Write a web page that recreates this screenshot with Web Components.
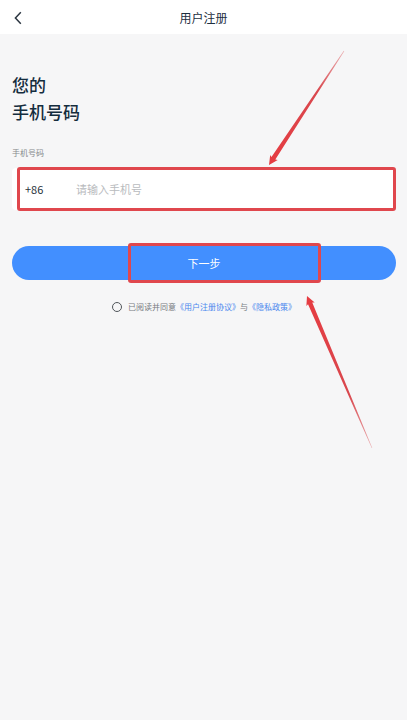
<!DOCTYPE html>
<html lang="zh-CN">
<head>
<meta charset="utf-8">
<meta name="viewport" content="width=device-width, initial-scale=1">
<title>用户注册</title>
<style>
  body {
    margin: 0;
    min-height: 100vh;
    background: #f6f6f7;
    color: #1d2f3f;
    font-family: "Noto Sans CJK SC", "Noto Sans", sans-serif;
  }
</style>
</head>
<body>
<register-page>
  <nav-bar>用户注册</nav-bar>
  <page-heading>您的<br>手机号码</page-heading>
  <phone-field label="手机号码" code="+86" placeholder="请输入手机号"></phone-field>
  <submit-button>下一步</submit-button>
  <consent-row></consent-row>
</register-page>

<script>
// Small helper: attach an open shadow root with the given markup
const shadow = (el, html) => {
  el.attachShadow({ mode: 'open' }).innerHTML = html;
};

class RegisterPage extends HTMLElement {
  connectedCallback() {
    shadow(this, `
      <style>
        :host {
          display: flex;
          flex-direction: column;
        }
        ::slotted(:not(nav-bar)) {
          margin-left: 12px;
          margin-right: 11px;
        }
      </style>
      <slot></slot>
    `);
  }
}

class NavBar extends HTMLElement {
  connectedCallback() {
    shadow(this, `
      <style>
        :host {
          display: grid;
          grid-template-columns: 36px 1fr 36px;
          align-items: center;
          height: 34px;
          padding-top: 2px;
          box-sizing: border-box;
          background: #fff;
        }
        button {
          display: flex;
          justify-content: center;
          border: 0;
          padding: 0;
          background: none;
          color: #2b3540;
        }
        h1 {
          margin: 0;
          font-size: 12px;
          line-height: 16px;
          font-weight: 400;
          text-align: center;
        }
      </style>
      <button type="button" aria-label="返回">
        <svg width="8" height="14" viewBox="0 0 8 14" fill="none" stroke="currentColor" stroke-width="1.5">
          <path d="M6.8 1.2 1.4 7l5.4 5.8"/>
        </svg>
      </button>
      <h1><slot></slot></h1>
    `);
  }
}

class PageHeading extends HTMLElement {
  connectedCallback() {
    shadow(this, `
      <style>
        :host { display: block; margin-top: 37px; }
        h2 {
          margin: 0;
          font-size: 17px;
          line-height: 27px;
          font-weight: 500;
          color: #142c3d;
        }
      </style>
      <h2><slot></slot></h2>
    `);
  }
}

class PhoneField extends HTMLElement {
  connectedCallback() {
    shadow(this, `
      <style>
        :host { display: block; margin-top: 22px; }
        label {
          display: block;
          font-size: 8px;
          line-height: 12px;
          color: #85888b;
        }
        .box {
          position: relative;
          display: flex;
          align-items: center;
          height: 42px;
          margin-top: 9px;
          padding-left: 13px;
          border-radius: 4px;
          background: #fff;
          font-size: 11px;
        }
        .code { width: 51px; color: #28323b; }
        input {
          flex: 1;
          min-width: 0;
          border: 0;
          padding: 0;
          outline: 0;
          background: none;
          font: inherit;
          color: #28323b;
        }
        input::placeholder { color: #b9bbbe; }
        mark-frame { inset: -1px 0 -1px 5px; }
        mark-arrow { right: 52px; bottom: 45px; }
      </style>
      <label for="phone">${this.getAttribute('label')}</label>
      <div class="box">
        <span class="code">${this.getAttribute('code')}</span>
        <input id="phone" type="tel" placeholder="${this.getAttribute('placeholder')}">
        <mark-frame></mark-frame>
        <mark-arrow width="75" height="114" tail="75,0" tip="0,114"></mark-arrow>
      </div>
    `);
  }
}

class SubmitButton extends HTMLElement {
  connectedCallback() {
    shadow(this, `
      <style>
        :host { display: block; position: relative; margin-top: 36px; }
        button {
          display: block;
          width: 100%;
          height: 34px;
          border: 0;
          border-radius: 17px;
          background: #428fff;
          color: #fff;
          font-family: inherit;
          font-size: 11px;
        }
        mark-frame { inset: -3px 75px -3px 116px; }
        mark-arrow { right: 24px; top: 50px; }
      </style>
      <button type="button"><slot></slot></button>
      <mark-frame></mark-frame>
      <mark-arrow width="65" height="152" tail="65,152" tip="0,0"></mark-arrow>
    `);
  }
}

class ConsentRow extends HTMLElement {
  connectedCallback() {
    shadow(this, `
      <style>
        :host {
          display: flex;
          justify-content: center;
          align-items: center;
          gap: 6px;
          margin-top: 21px;
          font-size: 8px;
          line-height: 12px;
          color: #777b80;
        }
        input {
          appearance: none;
          box-sizing: border-box;
          width: 10px;
          height: 10px;
          margin: 0;
          border: 1px solid #50555a;
          border-radius: 50%;
        }
        input:checked { background: #428fff; }
        a { color: #4a86ee; text-decoration: none; }
      </style>
      <input id="agree" type="checkbox">
      <label for="agree">已阅读并同意<a href="#terms">《用户注册协议》</a>与<a href="#privacy">《隐私政策》</a></label>
    `);
  }
}

// Red outline laid over a control; the host sets its inset
class MarkFrame extends HTMLElement {
  connectedCallback() {
    shadow(this, `
      <style>
        :host {
          position: absolute;
          box-sizing: border-box;
          border: 3px solid #e0474d;
          border-radius: 3px;
          pointer-events: none;
        }
      </style>
    `);
  }
}

// Tapered arrow that fades towards its tail
class MarkArrow extends HTMLElement {
  connectedCallback() {
    const w = this.getAttribute('width');
    const h = this.getAttribute('height');
    const [x0, y0] = this.getAttribute('tail').split(',').map(Number);
    const [x1, y1] = this.getAttribute('tip').split(',').map(Number);
    const len = Math.hypot(x1 - x0, y1 - y0);
    const angle = Math.atan2(y1 - y0, x1 - x0) * 180 / Math.PI;
    const n = len - 8;
    shadow(this, `
      <style>
        :host { position: absolute; pointer-events: none; }
        svg { display: block; overflow: visible; }
      </style>
      <svg width="${w}" height="${h}" aria-hidden="true">
        <defs>
          <linearGradient id="fade">
            <stop offset="0" stop-color="#d9484e" stop-opacity=".4"/>
            <stop offset=".35" stop-color="#d9484e"/>
            <stop offset="1" stop-color="#e63b41"/>
          </linearGradient>
        </defs>
        <g transform="translate(${x0} ${y0}) rotate(${angle})">
          <path fill="url(#fade)" d="M0 -.3 L${n} -2.3 L${n - 1} -4.5 L${len} 0 L${n - 1} 4.5 L${n} 2.3 L0 .3Z"/>
        </g>
      </svg>
    `);
  }
}

customElements.define('mark-frame', MarkFrame);
customElements.define('mark-arrow', MarkArrow);
customElements.define('nav-bar', NavBar);
customElements.define('page-heading', PageHeading);
customElements.define('phone-field', PhoneField);
customElements.define('submit-button', SubmitButton);
customElements.define('consent-row', ConsentRow);
customElements.define('register-page', RegisterPage);
</script>
</body>
</html>
